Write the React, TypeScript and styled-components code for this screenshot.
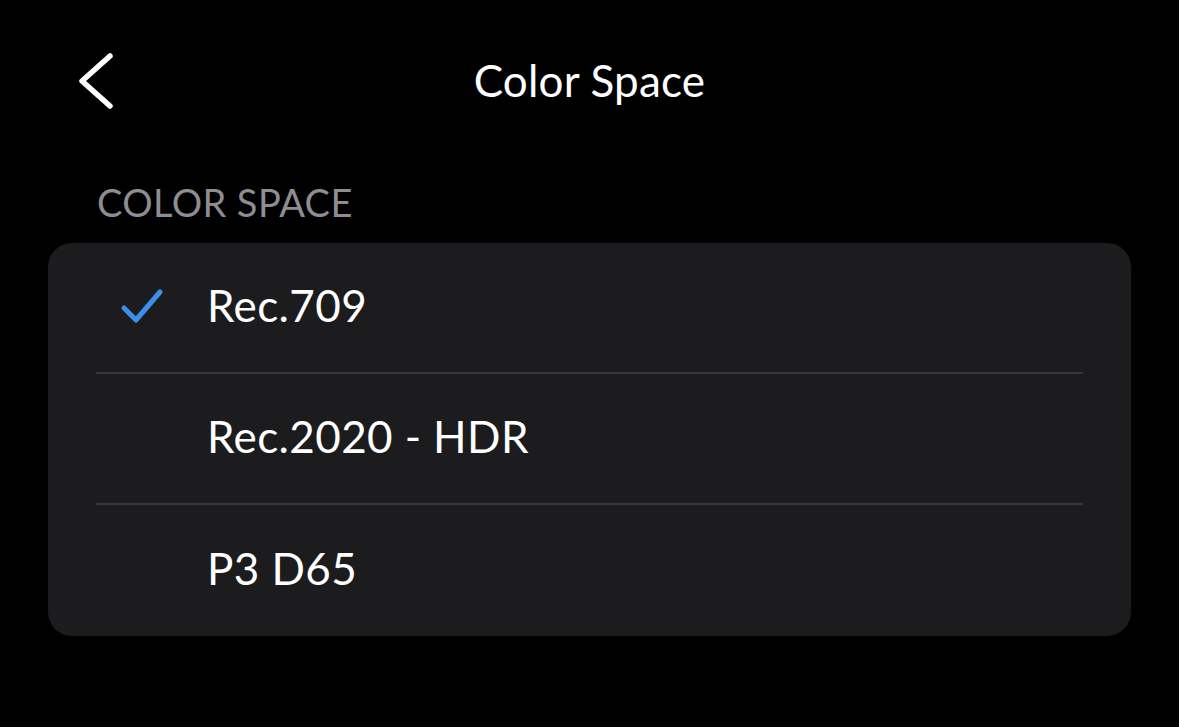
import React, { useState } from "react";
import styled, { createGlobalStyle } from "styled-components";

const Global = createGlobalStyle`
  html, body {
    margin: 0;
    padding: 0;
    background: #000;
  }
  body {
    font-family: Lato, "Noto Sans", sans-serif;
    color: #fff;
  }
`;

const options = ["Rec.709", "Rec.2020 - HDR", "P3 D65"];

function App() {
  const [selected, setSelected] = useState(0);

  return (
    <>
      <Global />
      <Page>
        <Header>
          <BackButton aria-label="Back">
            <svg width="42" height="60" viewBox="0 0 42 60" fill="none">
              <path
                d="M35 5 L7 30 L35 55"
                stroke="#fff"
                strokeWidth="5.5"
                strokeLinecap="round"
                strokeLinejoin="round"
              />
            </svg>
          </BackButton>
          <Title>Color Space</Title>
        </Header>
        <SectionLabel>COLOR SPACE</SectionLabel>
        <Card>
          {options.map((name, i) => (
            <Row key={name} onClick={() => setSelected(i)}>
              <CheckSlot>
                {selected === i && (
                  <svg width="44" height="36" viewBox="0 0 44 36" fill="none">
                    <path
                      d="M4 20 L16 32 L40 4"
                      stroke="#3b8fe8"
                      strokeWidth="5"
                      strokeLinecap="round"
                      strokeLinejoin="round"
                    />
                  </svg>
                )}
              </CheckSlot>
              <RowInner last={i === options.length - 1}>
                <Label>{name}</Label>
              </RowInner>
            </Row>
          ))}
        </Card>
      </Page>
    </>
  );
}

const Page = styled.div`
  width: 1179px;
  height: 727px;
  background: #000;
  padding: 0 48px;
  box-sizing: border-box;
`;

const Header = styled.div`
  position: relative;
  height: 160px;
  display: flex;
  align-items: flex-start;
  justify-content: center;
  padding-top: 52px;
  box-sizing: border-box;
`;

const BackButton = styled.button`
  position: absolute;
  left: 27px;
  top: 51px;
  background: none;
  border: none;
  padding: 0;
  cursor: pointer;
  line-height: 0;
`;

const Title = styled.h1`
  margin: 0;
  font-size: 44px;
  font-weight: 400;
  line-height: 56px;
  letter-spacing: 0.2px;
`;

const SectionLabel = styled.div`
  padding-left: 49px;
  font-size: 38px;
  line-height: 44px;
  color: #8d8d92;
  margin-top: 20px;
  margin-bottom: 19px;
  letter-spacing: 0.4px;
`;

const Card = styled.div`
  background: #1c1c1e;
  border-radius: 24px;
  overflow: hidden;
`;

const Row = styled.div`
  display: flex;
  align-items: stretch;
  height: 131px;
  cursor: pointer;
`;

const CheckSlot = styled.div`
  width: 160px;
  flex-shrink: 0;
  display: flex;
  align-items: center;
  justify-content: flex-start;
  padding-left: 72px;
  box-sizing: border-box;
  margin-top: -6px;
`;

const RowInner = styled.div<{ last: boolean }>`
  flex: 1;
  display: flex;
  align-items: center;
  margin-right: 48px;
  margin-left: -112px;
  padding-left: 111px;
  border-bottom: ${(p) => (p.last ? "none" : "2px solid #38383a")};
`;

const Label = styled.span`
  font-size: 44px;
  line-height: 56px;
  margin-top: -5px;
  letter-spacing: 0.4px;
`;

export default App;
